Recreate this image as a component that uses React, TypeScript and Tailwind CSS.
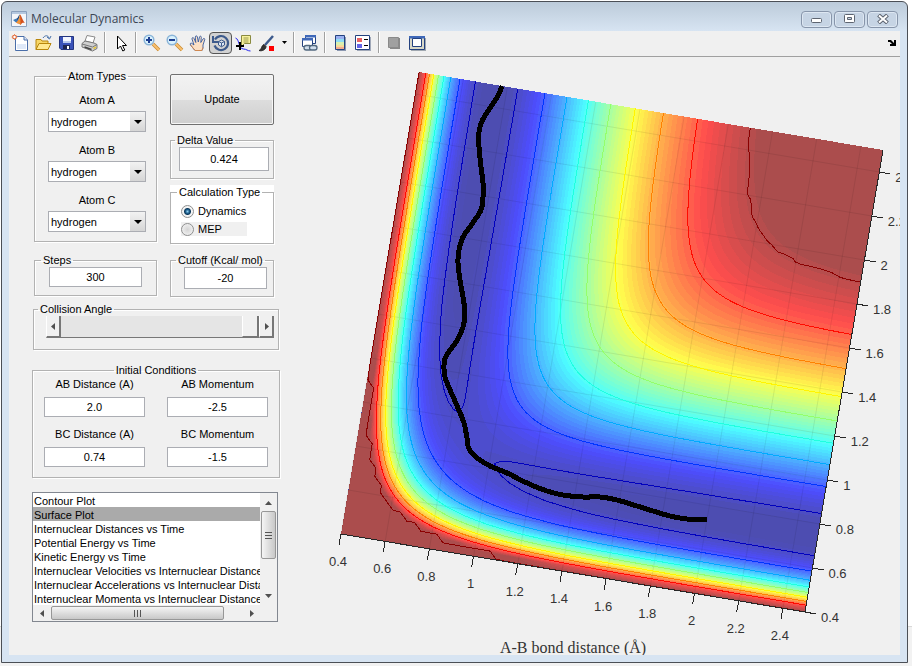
import React from "react";

/* ---------- potential energy surface (LEPS, collinear H + H2) ---------- */

const DEPTH = 109.5;
const BETA = 1.942;
const R0 = 0.742;
const SATO = 0.19;
const LO = 0.4;
const HI = 2.5;
const CUTOFF = -20;
const RIM = -22.3;
const FLOOR = -109.5;

type Pt = [number, number];

function pair(r: number): Pt {
  const e = Math.exp(-BETA * (r - R0));
  const s = (1 + SATO) * DEPTH * (e * e - 2 * e);
  const t = (1 - SATO) * (DEPTH / 2) * (e * e + 2 * e);
  return [(s + t) / 2, (s - t) / 2];
}

function energy(ab: number, bc: number): number {
  const [q1, j1] = pair(ab);
  const [q2, j2] = pair(bc);
  const [q3, j3] = pair(ab + bc);
  const root = Math.sqrt(((j1 - j2) ** 2 + (j2 - j3) ** 2 + (j3 - j1) ** 2) / 2);
  return (q1 + q2 + q3 - root) / (1 + SATO);
}

function toScreen(u: number, v: number): Pt {
  const a = (u - LO) / (HI - LO);
  const b = (v - LO) / (HI - LO);
  return [341 + 464 * a + 78 * b, 534 + 78 * a - 462 * b];
}

function jet(t: number, alpha: number): string {
  const ch = (c: number) => {
    const x = Math.max(0, Math.min(1, 1.5 - Math.abs(4 * t - c)));
    return Math.round(255 * (x * alpha + 1 - alpha));
  };
  return `rgb(${ch(3)},${ch(2)},${ch(1)})`;
}

interface Field {
  n: number;
  pos: number[];
  val: number[][];
}

function sample(cells: number, padded: boolean, cap: number): Field {
  const pos: number[] = [];
  for (let i = 0; i <= cells; i++) pos.push(LO + ((HI - LO) * i) / cells);
  const val = pos.map((u) => pos.map((v) => Math.min(cap, energy(u, v))));
  if (!padded) return { n: pos.length, pos, val };
  const p = [LO, ...pos, HI];
  const low = p.map(() => -1e9);
  const rows = val.map((r) => [-1e9, ...r, -1e9]);
  return { n: p.length, pos: p, val: [low, ...rows, low] };
}

/* Marching squares: joins each crossing to the next one into rings or runs. */
function contour(f: Field, level: number): string {
  const next = new Map<string, string>();
  const where = new Map<string, Pt>();
  const ends = new Set<string>();
  for (let i = 0; i < f.n - 1; i++) {
    for (let j = 0; j < f.n - 1; j++) {
      const c: Pt[] = [[i, j], [i + 1, j], [i + 1, j + 1], [i, j + 1]];
      const inside = c.map(([x, y]) => f.val[x][y] >= level);
      if (inside.every((s) => s === inside[0])) continue;
      const keys = [`h${i},${j}`, `v${i + 1},${j}`, `h${i},${j + 1}`, `v${i},${j}`];
      for (let k = 0; k < 4; k++) {
        const m = (k + 1) % 4;
        if (inside[k] === inside[m]) continue;
        if (!where.has(keys[k])) {
          const a = f.val[c[k][0]][c[k][1]];
          const b = f.val[c[m][0]][c[m][1]];
          const t = (level - a) / (b - a);
          const u = f.pos[c[k][0]] + t * (f.pos[c[m][0]] - f.pos[c[k][0]]);
          const v = f.pos[c[k][1]] + t * (f.pos[c[m][1]] - f.pos[c[k][1]]);
          where.set(keys[k], toScreen(u, v));
        }
        if (inside[k]) {
          let e = m;
          while (!(!inside[e] && inside[(e + 1) % 4])) e = (e + 1) % 4;
          next.set(keys[k], keys[e]);
          ends.add(keys[e]);
        }
      }
    }
  }
  let d = "";
  const put = (key: string, cmd: string) => {
    const [x, y] = where.get(key)!;
    d += `${cmd}${x.toFixed(2)} ${y.toFixed(2)}`;
  };
  const trace = (start: string) => {
    put(start, "M");
    let cur = start;
    while (next.has(cur)) {
      const n = next.get(cur)!;
      next.delete(cur);
      put(n, "L");
      cur = n;
    }
  };
  [...next.keys()].filter((k) => !ends.has(k)).forEach(trace);
  while (next.size) trace(next.keys().next().value as string);
  return d;
}

const filledGrid = sample(84, true, CUTOFF);
const lineGrid = sample(84, false, CUTOFF);
const rimGrid = sample(60, false, RIM);
const SHADES = 64;

const bands = Array.from({ length: SHADES - 1 }, (_, k) => ({
  d: contour(filledGrid, FLOOR + ((CUTOFF - FLOOR) * (k + 1)) / SHADES),
  color: jet((k + 1.5) / SHADES, 0.7),
}));

const lines = Array.from({ length: 8 }, (_, k) => {
  const level = -105.7 + 10.25 * k;
  return { d: contour(lineGrid, level), color: jet((level - FLOOR) / (CUTOFF - FLOOR) + 0.02, 1) };
});
lines.push({ d: contour(rimGrid, RIM - 0.2), color: "#8b0000" });

const trajectory: Pt[] = [
  [502, 86], [498, 96], [490, 108], [482, 121], [479, 132], [479, 147], [481, 167], [483, 183], [483, 197],
  [481, 210], [472, 224], [463, 237], [459, 250], [458, 263], [460, 280], [463, 297], [465, 313], [463, 327],
  [456, 342], [446, 356], [444, 365], [445, 377], [451, 392], [458, 408], [464, 423], [467, 438], [469, 449],
  [477, 458], [490, 466], [507, 473], [527, 483], [547, 491], [563, 495], [583, 497], [600, 497], [617, 500],
  [637, 506], [653, 511], [670, 516], [687, 519], [707, 519],
];

function smooth(p: Pt[]): string {
  let d = `M${p[0]}`;
  for (let i = 0; i < p.length - 1; i++) {
    const a = p[Math.max(0, i - 1)];
    const b = p[i];
    const c = p[i + 1];
    const e = p[Math.min(p.length - 1, i + 2)];
    d += `C${b[0] + (c[0] - a[0]) / 6},${b[1] + (c[1] - a[1]) / 6} ${c[0] - (e[0] - b[0]) / 6},${c[1] - (e[1] - b[1]) / 6} ${c}`;
  }
  return d;
}

const ticks = Array.from({ length: 11 }, (_, k) => Math.round(4 + 2 * k) / 10);

function SurfacePlot() {
  const corners = [toScreen(LO, LO), toScreen(HI, LO), toScreen(HI, HI), toScreen(LO, HI)];
  return (
    <svg viewBox="300 57 600 598" className="block h-auto w-full" role="img" aria-label="Surface plot of the potential energy">
      <g shapeRendering="crispEdges">
        <polygon points={corners.map((c) => c.join(",")).join(" ")} fill={jet(0.016, 0.7)} />
        {bands.map((b, i) => (
          <path key={i} d={b.d} fill={b.color} fillRule="evenodd" />
        ))}
      </g>
      <g stroke="#000" strokeOpacity="0.08">
        {ticks.map((t) => {
          const [a, b] = toScreen(t, LO);
          const [c, d] = toScreen(t, HI);
          const [e, f] = toScreen(LO, t);
          const [g, h] = toScreen(HI, t);
          return <path key={t} d={`M${a} ${b}L${c} ${d}M${e} ${f}L${g} ${h}`} />;
        })}
      </g>
      <g shapeRendering="crispEdges" fill="none">
        {lines.map((l, i) => (
          <path key={i} d={l.d} stroke={l.color} />
        ))}
        <path d="M341 534L805 612L883 150" stroke="#262626" />
        {ticks.map((t) => {
          const [a, b] = toScreen(t, LO);
          const [c, d] = toScreen(HI, t);
          return <path key={t} d={`M${a} ${b}l-2 11M${c} ${d}l11 2`} stroke="#262626" />;
        })}
        <path d={smooth(trajectory)} stroke="#000" strokeWidth="5" strokeLinejoin="round" />
      </g>
      <g fill="#333" fontFamily="'Liberation Sans', Arial, sans-serif" fontSize="13">
        {ticks.map((t) => {
          const [a, b] = toScreen(t, LO);
          const [c, d] = toScreen(HI, t);
          return (
            <React.Fragment key={t}>
              <text x={a - 3} y={b + 32} textAnchor="middle">{t}</text>
              <text x={c + 16} y={d + 10}>{t}</text>
            </React.Fragment>
          );
        })}
      </g>
      <text x="573" y="653" textAnchor="middle" fontFamily="'Liberation Serif', 'Times New Roman', serif" fontSize="16" fill="#333">
        A-B bond distance (Å)
      </text>
    </svg>
  );
}

/* ---------- toolbar ---------- */

const icons: Record<string, React.ReactNode> = {
  "New figure": (
    <>
      <path d="M4.500 3.500H13L16.500 7V17.500H4.500Z" fill="#fff" stroke="#4a6ea9" />
      <path d="M6 11h9v5H6z" fill="#dfe9f8" />
      <path d="M13 3.500V7h3.500" fill="#dce6f5" stroke="#4a6ea9" />
      <path d="M3.500 1v6M0.500 4h6M1.500 2l4 4M5.500 2l-4 4" stroke="#f0a070" />
      <circle cx="3.500" cy="4" r="1.800" fill="#fff" stroke="#e06030" />
    </>
  ),
  "Open file": (
    <>
      <path d="M2 16.500V6.500h5l1 1.500h6v8.500z" fill="#f7d667" stroke="#b8860b" />
      <path d="M2 16.500L5 10.500h12l-3 6z" fill="#ffe890" stroke="#b8860b" />
      <path d="M9 5c2-3 5-3 6 0M13 4l2.500 2L17 3" fill="none" stroke="#456fa8" />
    </>
  ),
  "Save figure": (
    <>
      <path d="M2.500 3.500h14v13H4l-1.500-1.500z" fill="#3a52b8" stroke="#24357f" />
      <path d="M6 4h8v6H6z" fill="#f3f6ff" />
      <path d="M6 8h8v2H6z" fill="#b8c8ee" />
      <path d="M6 12h7v4H6z" fill="#1d2450" />
      <path d="M10 13h2v3h-2z" fill="#fff" />
    </>
  ),
  "Print figure": (
    <>
      <path d="M7 2.500l8 1.500-2 6-8-2z" fill="#fff" stroke="#8a8a8a" />
      <path d="M2 10.500L5 8l9 2 3 1.500v4l-4.500 2.500-10.500-4z" fill="#cfcfcf" stroke="#777" />
      <path d="M2 11l10.500 3 4.500-2.500" fill="none" stroke="#777" />
      <path d="M4.500 14l7 2.500" stroke="#444" strokeWidth="1.500" />
      <path d="M13.500 15.500l2.500-1.300" stroke="#e5c430" strokeWidth="1.500" />
    </>
  ),
  "Edit plot": <path d="M6.500 3v13l3-3 2.300 5 2-1-2.300-4.500h4z" fill="#fff" stroke="#000" />,
  "Zoom in": (
    <>
      <path d="M11 11l6 6" stroke="#c98a30" strokeWidth="3.500" />
      <path d="M11 11l6 6" stroke="#f8c070" strokeWidth="2" />
      <circle cx="7" cy="7" r="4.800" fill="#d9f1fc" stroke="#8ab4d8" strokeWidth="1.500" />
      <path d="M4 7h6M7 4v6" stroke="#1d3f91" strokeWidth="2" />
    </>
  ),
  "Zoom out": (
    <>
      <path d="M11 11l6 6" stroke="#c98a30" strokeWidth="3.500" />
      <path d="M11 11l6 6" stroke="#f8c070" strokeWidth="2" />
      <circle cx="7" cy="7" r="4.800" fill="#d9f1fc" stroke="#8ab4d8" strokeWidth="1.500" />
      <path d="M4 7h6" stroke="#1d3f91" strokeWidth="2" />
    </>
  ),
  Pan: (
    <>
      <path
        d="M7 17.500L2.500 12c-1-1.500.5-2.500 1.500-1.500L6 12 4 6c-.3-1.500 1.500-2 2-.5L7.800 9.500 7.300 4c0-1.500 2-1.500 2.100 0L10.300 9l1.200-5c.3-1.300 2-1 1.800.4L12.800 9.500 15 6c.8-1.200 2.200-.4 1.700.8L15 12v3l-1 2.500z"
        fill="#fde0c4"
        stroke="#35599c"
        strokeWidth="0.9"
      />
      <path d="M2.500 12L7 17.500h7l1-3" fill="none" stroke="#d08850" />
    </>
  ),
  "Rotate 3D": (
    <>
      <path d="M4 6.500a7 7 0 1 1-.5 6" fill="none" stroke="#3d5a8c" strokeWidth="2.200" />
      <path d="M2 3v6h6" fill="none" stroke="#3d5a8c" strokeWidth="2" />
      <path d="M7.500 8.500l3-1.500 3 1.500v3.500l-3 1.800-3-1.800zM7.500 8.500l3 1.500 3-1.500M10.500 10v3.500" fill="#dce8f8" stroke="#3d5a8c" />
    </>
  ),
  "Data cursor": (
    <>
      <path d="M1.500 5c4 1 3 11 8 11 3 0 4 2 7 2" fill="none" stroke="#2222ee" />
      <path d="M7.500 2.500h9v8h-6l-3 3z" fill="#f8f29c" stroke="#8a8a40" />
      <path d="M9.500 5h5M9.500 7h5M9.500 9h5" stroke="#9a9a50" />
      <path d="M2 13h8M6 9v8" stroke="#000" strokeWidth="2" />
    </>
  ),
  Brush: (
    <>
      <path d="M16 3L8 12" stroke="#3d5a8c" strokeWidth="2.500" />
      <path d="M2 17.500c3-.5 2-5 5-6l2 2c0 3-4 5-7 4z" fill="#333" stroke="#222" />
      <path d="M12 13h5v5h-5z" fill="#f00" />
    </>
  ),
  "Link plot": (
    <>
      <path d="M5.500 2.500h10v8h-10z" fill="#fff" stroke="#24427f" />
      <path d="M5 2h11v2.500H5z" fill="#3f68b8" />
      <path d="M2.500 5.500h10v8h-10z" fill="#fff" stroke="#24427f" />
      <path d="M2 5h11v2.500H2z" fill="#3f68b8" />
      <rect x="4" y="12.500" width="7.500" height="4.500" rx="2.200" fill="#cfdcea" stroke="#52687f" strokeWidth="1.300" />
      <rect x="9.500" y="12.500" width="7.500" height="4.500" rx="2.200" fill="#cfdcea" stroke="#52687f" strokeWidth="1.300" />
    </>
  ),
  "Insert colorbar": (
    <>
      <path d="M6 4h9v14H6z" fill="#8b98b0" />
      <path d="M4.500 2.500h9v14h-9z" fill="#9ab0f0" stroke="#24427f" />
      <path d="M5 6h8v3H5z" fill="#90dcf4" />
      <path d="M5 9h8v3H5z" fill="#d8f0b0" />
      <path d="M5 12h8v2H5z" fill="#f8dc98" />
      <path d="M5 14h8v2H5z" fill="#f4ac90" />
    </>
  ),
  "Insert legend": (
    <>
      <path d="M3 4h14v14H3z" fill="#a0a8b8" />
      <path d="M1.500 2.500h14v14h-14z" fill="#fff" stroke="#24427f" />
      <path d="M3 5h5v4H3z" fill="#e86464" />
      <path d="M3 11h5v4H3z" fill="#6464e8" />
      <path d="M10 6.500h4M10 12.500h4" stroke="#000" />
    </>
  ),
  "Hide plot tools": (
    <>
      <path d="M5 5h10v11H5z" fill="#888" />
      <path d="M3.500 4.500h10v10h-10z" fill="#a0a0a0" stroke="#8a8a8a" />
    </>
  ),
  "Show plot tools": (
    <>
      <path d="M3 5h15v13H3z" fill="#a0a8b0" />
      <path d="M1.500 3.500h15v13h-15z" fill="#d8d8c8" stroke="#24427f" />
      <path d="M1 3h16v2.500H1z" fill="#3f68b8" />
      <path d="M4.500 5.500h9v8h-9z" fill="#fff" stroke="#24427f" />
    </>
  ),
};

function Tool({ name, pressed }: { name: string; pressed?: boolean }) {
  return (
    <button
      type="button"
      aria-label={name}
      aria-pressed={pressed}
      className={
        pressed
          ? "flex h-[22px] w-[23px] items-center justify-center rounded-sm border border-[#555] bg-[#d2d2d2]"
          : "flex h-[22px] w-[23px] items-center justify-center"
      }
    >
      <svg viewBox="0 0 20 20" className="size-5 shrink-0">{icons[name]}</svg>
    </button>
  );
}

function Divider() {
  return <div className="mx-[3px] h-[21px] w-[2px] border-l border-[#a0a0a0] bg-white" />;
}

function Toolbar() {
  return (
    <div className="flex h-[26px] items-center border-b border-[#a0a0a0] bg-[#f0f0f0] pr-1 pb-[2px]">
      {["New figure", "Open file", "Save figure", "Print figure"].map((n) => <Tool key={n} name={n} />)}
      <Divider />
      <Tool name="Edit plot" />
      <Divider />
      <Tool name="Zoom in" />
      <Tool name="Zoom out" />
      <Tool name="Pan" />
      <Tool name="Rotate 3D" pressed />
      <Tool name="Data cursor" />
      <Tool name="Brush" />
      <button type="button" aria-label="Brush options" className="flex h-5 w-3 items-center justify-center">
        <svg viewBox="0 0 5 3" className="h-[3px] w-[5px]"><path d="M0 0h5L2.500 3z" /></svg>
      </button>
      <Divider />
      <Tool name="Link plot" />
      <Divider />
      <Tool name="Insert colorbar" />
      <Tool name="Insert legend" />
      <Divider />
      <Tool name="Hide plot tools" />
      <Tool name="Show plot tools" />
      <button type="button" aria-label="Dock figure" className="ml-auto">
        <svg viewBox="0 0 8 7" className="h-[7px] w-2">
          <path d="M0 1h3l3 3V1h2v6H2V5h2L2 3H0z" />
        </svg>
      </button>
    </div>
  );
}

/* ---------- title bar ---------- */

const windowButton =
  "flex h-[17px] w-[31px] items-center justify-center rounded-sm border border-[#8795aa] bg-[#c6d4e4] shadow-[inset_0_0_0_1px_#dde7f2]";

function TitleBar() {
  return (
    <header className="flex h-[29px] items-center pt-[5px] pr-[2px]">
      <svg viewBox="0 0 16 16" className="ml-[2px] size-4">
        <path d="M0.500 0.500h15v15h-15z" fill="#f4f6fa" stroke="#8aa0bd" />
        <path d="M1 1h14v2H1z" fill="#b4c8e0" />
        <path d="M2 9l3.500-1.500L7 10l-2 1.500z" fill="#3a78b8" />
        <path d="M5.500 7.500C7.500 7 7.500 3.500 9 3.500L7 10z" fill="#1c4a80" />
        <path d="M9 3.500c1.500 1 2.500 6 5 8.500-2-.5-3-.5-4.500 2C8.500 12 7 13 5 11.500 7.500 10.500 8.500 7 9 3.500z" fill="#d4501c" />
        <path d="M9 3.500c.2 3 .5 6 .5 10.500C8.500 12 7 13 5 11.500 7.500 10.500 8.500 7 9 3.500z" fill="#f0983c" />
      </svg>
      <h1 className="ml-1 font-['Open_Sans','Noto_Sans',sans-serif] text-xs text-[#3c4654]">Molecular Dynamics</h1>
      <div className="ml-auto flex gap-[2px]">
        <button type="button" aria-label="Minimize" className={windowButton}>
          <svg viewBox="0 0 12 5" className="mt-[2px] h-[5px] w-3"><rect x="0.500" y="0.500" width="10" height="4" rx="1" fill="#fff" stroke="#5d6470" /></svg>
        </button>
        <button type="button" aria-label="Maximize" className={windowButton}>
          <svg viewBox="0 0 12 10" className="h-[10px] w-3">
            <rect x="0.500" y="0.500" width="10" height="8" rx="1" fill="#fff" stroke="#5d6470" />
            <path d="M3.500 3.500h4v2h-4z" fill="#c6d4e4" stroke="#5d6470" />
          </svg>
        </button>
        <button type="button" aria-label="Close" className={windowButton}>
          <svg viewBox="0 0 12 10" className="h-[10px] w-3">
            <path d="M1.500 1l9 8M10.500 1l-9 8" stroke="#5d6470" strokeWidth="4" />
            <path d="M2 1.500l8 7M10 1.500l-8 7" stroke="#fff" strokeWidth="2" />
          </svg>
        </button>
      </div>
    </header>
  );
}

/* ---------- control panels ---------- */

function Group({ title, className, legend, children }: { title: string; className: string; legend: string; children: React.ReactNode }) {
  return (
    <fieldset className={`border border-[#b2b2b2] shadow-[1px_1px_0_#fff,inset_1px_1px_0_#fff] ${className}`}>
      <legend className={`leading-[14px] whitespace-nowrap ${legend}`}>{title}</legend>
      {children}
    </fieldset>
  );
}

function AtomSelect({ label }: { label: string }) {
  return (
    <label className="flex flex-col items-center gap-1 leading-[14px]">
      {label}
      <span className="relative block w-full">
        <select defaultValue="hydrogen" className="block h-[21px] w-full appearance-none border border-[#abadb3] bg-white pl-[2px]">
          <option>hydrogen</option>
        </select>
        <span className="pointer-events-none absolute inset-y-px right-px flex w-[15px] items-center justify-center bg-linear-to-b from-[#f2f2f2] to-[#d6d6d6]">
          <svg viewBox="0 0 8 4" className="h-1 w-2"><path d="M0 0h8L4 4z" /></svg>
        </span>
      </span>
    </label>
  );
}

const field = "block w-full border border-[#abadb3] bg-white text-center";

function Labelled({ label, value }: { label: string; value: string }) {
  return (
    <label className="flex flex-col items-center gap-[6px] leading-[14px]">
      {label}
      <input defaultValue={value} className={`${field} h-5`} />
    </label>
  );
}

function Radio({ label, checked, className }: { label: string; checked?: boolean; className: string }) {
  return (
    <label className={`flex h-[14px] w-[66px] items-center gap-1 ${className}`}>
      <input
        type="radio"
        name="calculation"
        defaultChecked={checked}
        className="size-[13px] shrink-0 appearance-none rounded-full border border-[#8e8f8f] bg-[radial-gradient(circle,#d4d4d4,#f8f8f8)] checked:bg-[radial-gradient(circle,#8fd0f0_0px,#1b5a88_2px,#0d3a5c_3px,#f4f4f4_4px)]"
      />
      {label}
    </label>
  );
}

const plots = [
  "Contour Plot",
  "Surface Plot",
  "Internuclear Distances vs Time",
  "Potential Energy vs Time",
  "Kinetic Energy vs Time",
  "Internuclear Velocities vs Internuclear Distance",
  "Internuclear Accelerations vs Internuclear Distance",
  "Internuclear Momenta vs Internuclear Distance",
];

const arrows = {
  up: "M0 6h7L3.500 2z",
  down: "M0 1h7L3.500 5z",
  left: "M5 0v7L1 3.500z",
  right: "M2 0v7L6 3.500z",
};

function Arrow({ dir, className }: { dir: keyof typeof arrows; className: string }) {
  return (
    <button type="button" aria-label={`Scroll ${dir}`} className={`flex shrink-0 items-center justify-center ${className}`}>
      <svg viewBox="0 0 7 7" className="size-[7px]"><path d={arrows[dir]} fill="#505050" /></svg>
    </button>
  );
}

function PlotList() {
  return (
    <div className="ml-[23px] grid w-[246px] grid-cols-[1fr_17px] border border-[#828790] bg-white">
      <select
        size={8}
        aria-label="Plot type"
        defaultValue="Surface Plot"
        className="h-[112px] w-full min-w-0 overflow-hidden bg-white outline-none [scrollbar-width:none]"
      >
        {plots.map((p) => (
          <option key={p} className="h-[14px] min-h-0 overflow-hidden p-0 pt-[2px] pl-px leading-[12px] whitespace-nowrap text-black checked:bg-[#aaa] checked:text-black">
            {p}
          </option>
        ))}
      </select>
      <div className="flex flex-col bg-[#f0f0f0]">
        <Arrow dir="up" className="h-[18px]" />
        <div className="mx-px flex h-[48px] flex-col items-center justify-center gap-[2px] rounded-xs border border-[#979797] bg-linear-to-r from-[#f5f5f5] to-[#c8c8c8]">
          <i className="h-px w-[7px] bg-[#555]" />
          <i className="h-px w-[7px] bg-[#555]" />
          <i className="h-px w-[7px] bg-[#555]" />
        </div>
        <Arrow dir="down" className="mt-auto h-[17px]" />
      </div>
      <div className="flex h-4 bg-[#f0f0f0]">
        <Arrow dir="left" className="w-[18px]" />
        <div className="my-px flex w-[173px] items-center justify-center gap-[2px] rounded-xs border border-[#979797] bg-linear-to-b from-[#f5f5f5] to-[#c8c8c8]">
          <i className="h-[7px] w-px bg-[#555]" />
          <i className="h-[7px] w-px bg-[#555]" />
          <i className="h-[7px] w-px bg-[#555]" />
        </div>
        <Arrow dir="right" className="ml-auto w-[17px]" />
      </div>
      <div className="bg-[#f0f0f0]" />
    </div>
  );
}

const slideArrow = "w-[15px] border-r-2 border-b-2 border-l border-r-[#777] border-b-[#777] border-l-white";

function Controls() {
  return (
    <form className="w-[291px] shrink-0 pt-3 font-['Liberation_Sans',Arial,sans-serif] text-[11px] text-black">
      <div className="flex gap-[13px] pl-[25px]">
        <div className="w-[123px]">
          <Group title="Atom Types" legend="mx-auto px-[2px]" className="pr-[10px] pb-[9px] pl-[13px]">
            <div className="flex flex-col gap-[11px] pt-[10px]">
              <AtomSelect label="Atom A" />
              <AtomSelect label="Atom B" />
              <AtomSelect label="Atom C" />
            </div>
          </Group>
          <Group title="Steps" legend="-ml-2 px-[2px]" className="mt-[11px] px-[14px] pb-2">
            <input aria-label="Steps" defaultValue="300" className={`${field} h-5`} />
          </Group>
        </div>
        <div className="w-[104px]">
          <button
            type="button"
            className="mt-[5px] h-[51px] w-full rounded-xs border border-[#707070] bg-[linear-gradient(#f2f2f2,#ebebeb_50%,#dddddd_50%,#cfcfcf)] shadow-[inset_0_0_0_1px_#f6f6f6]"
          >
            Update
          </button>
          <Group title="Delta Value" legend="-ml-1 px-[2px]" className="mt-2 pr-1 pb-[7px] pl-2">
            <input aria-label="Delta value" defaultValue="0.424" className={`${field} h-6`} />
          </Group>
          <div className="mt-[6px] bg-white">
            <Group title="Calculation Type" legend="-ml-1 px-[2px]" className="pb-[7px] pl-[10px]">
              <Radio label="Dynamics" checked className="mt-[5px]" />
              <Radio label="MEP" className="mt-1 bg-[#f0f0f0]" />
            </Group>
          </div>
          <Group title="Cutoff (Kcal/ mol)" legend="-ml-2 px-[2px]" className="mt-[9px] pr-[6px] pb-[7px] pl-[13px]">
            <input aria-label="Cutoff" defaultValue="-20" className={`${field} h-[22px]`} />
          </Group>
        </div>
      </div>
      <Group title="Collision Angle" legend="-ml-2 px-[2px]" className="mt-[5px] ml-6 w-[246px] pb-[11px] pl-3">
        <div className="flex h-[22px] w-[228px]">
          <Arrow dir="left" className={slideArrow} />
          <input
            type="range"
            aria-label="Collision angle"
            defaultValue={100}
            className="h-full min-w-0 flex-1 appearance-none border-b border-[#777] bg-[#e5e5e5] [&::-webkit-slider-thumb]:h-[21px] [&::-webkit-slider-thumb]:w-[17px] [&::-webkit-slider-thumb]:appearance-none [&::-webkit-slider-thumb]:border-r-2 [&::-webkit-slider-thumb]:border-b [&::-webkit-slider-thumb]:border-l [&::-webkit-slider-thumb]:border-r-[#777] [&::-webkit-slider-thumb]:border-b-[#777] [&::-webkit-slider-thumb]:border-l-white [&::-webkit-slider-thumb]:bg-[#f0f0f0]"
          />
          <Arrow dir="right" className={slideArrow} />
        </div>
      </Group>
      <Group title="Initial Conditions" legend="mx-auto px-[2px]" className="mt-[13px] mb-[14px] ml-[23px] w-[248px] px-[11px] pb-[10px]">
        <div className="grid grid-cols-2 gap-x-[22px] gap-y-[10px]">
          <Labelled label="AB Distance (A)" value="2.0" />
          <Labelled label="AB Momentum" value="-2.5" />
          <Labelled label="BC Distance (A)" value="0.74" />
          <Labelled label="BC Momentum" value="-1.5" />
        </div>
      </Group>
      <PlotList />
    </form>
  );
}

export default function App() {
  return (
    <div className="min-h-screen bg-[linear-gradient(to_top,#f2f2f2_39px,#d8d8d8_39px,#d8d8d8_40px,#fff_40px)] pt-px pr-1 pb-[3px] pl-px">
      <div className="rounded-t-md border border-[#4b4f56] bg-[linear-gradient(#bccbda,#d7e4f2_29px)] px-[7px] pb-[7px]">
        <TitleBar />
        <Toolbar />
        <main className="flex bg-[#f0f0f0]">
          <Controls />
          <div className="min-w-0 flex-1">
            <SurfacePlot />
          </div>
        </main>
      </div>
    </div>
  );
}
